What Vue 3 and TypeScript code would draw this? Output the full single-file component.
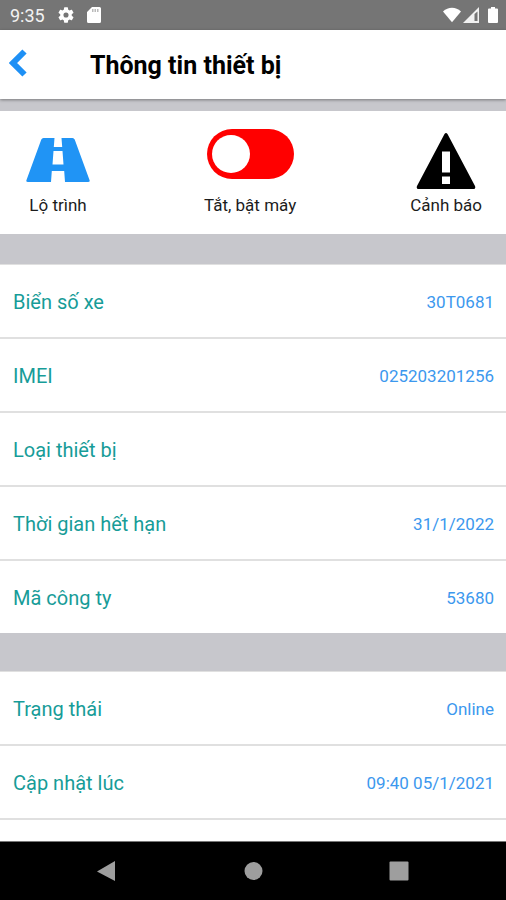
<script setup lang="ts">
import { ref } from 'vue'

interface Field {
  label: string
  value: string
}

const engineOn = ref<boolean>(false)

const deviceFields: Field[] = [
  { label: 'Biển số xe', value: '30T0681' },
  { label: 'IMEI', value: '025203201256' },
  { label: 'Loại thiết bị', value: '' },
  { label: 'Thời gian hết hạn', value: '31/1/2022' },
  { label: 'Mã công ty', value: '53680' },
]

const statusFields: Field[] = [
  { label: 'Trạng thái', value: 'Online' },
  { label: 'Cập nhật lúc', value: '09:40 05/1/2021' },
]
</script>

<template>
  <div class="screen">
    <div class="status-bar">
      <div class="status-group status-left">
        <span>9:35</span>
        <svg class="gear" viewBox="2 2 20 20" aria-hidden="true">
          <path fill-rule="evenodd" d="M19.14 12.94c.04-.3.06-.61.06-.94s-.02-.64-.07-.94l2.03-1.58a.49.49 0 0 0 .12-.61l-1.92-3.32a.49.49 0 0 0-.59-.22l-2.39.96a7 7 0 0 0-1.62-.94l-.36-2.54a.48.48 0 0 0-.48-.41h-3.84a.47.47 0 0 0-.47.41l-.36 2.54c-.59.24-1.13.57-1.62.94l-2.39-.96a.48.48 0 0 0-.59.22L2.74 8.87a.47.47 0 0 0 .12.61l2.03 1.58c-.05.3-.09.63-.09.94s.02.64.07.94l-2.03 1.58a.49.49 0 0 0-.12.61l1.92 3.32c.12.22.37.29.59.22l2.39-.96c.5.38 1.03.7 1.62.94l.36 2.54c.05.24.24.41.48.41h3.84c.24 0 .44-.17.47-.41l.36-2.54c.59-.24 1.13-.56 1.62-.94l2.39.96c.22.08.47 0 .59-.22l1.92-3.32a.47.47 0 0 0-.12-.61zM12 15.2a3.2 3.2 0 1 1 0-6.4 3.2 3.2 0 0 1 0 6.4z" />
        </svg>
        <svg class="card" viewBox="0 0 14 16" aria-hidden="true">
          <path d="M5 0h7.500a1.500 1.500 0 0 1 1.500 1.500v13a1.500 1.500 0 0 1-1.500 1.500h-11A1.500 1.500 0 0 1 0 14.500V5z" />
          <path class="cutout card-slots" d="M5 2h1.500v3H5zM7.500 2H9v3H7.500zM10 2h1.500v3H10z" />
        </svg>
      </div>
      <div class="status-group status-right">
        <svg class="wifi" viewBox="0 0 20 16" aria-hidden="true">
          <path d="M10 16 0 4Q4.500 0 10 0t10 4z" />
        </svg>
        <svg class="signal" viewBox="0 0 16 16" aria-hidden="true">
          <path d="M16 0v16H0z" opacity=".9" />
          <path class="cutout" d="M11.500 7 14.500 4.500V14h-3z" />
        </svg>
        <svg class="battery" viewBox="0 0 10 16" aria-hidden="true">
          <path d="M3 0h4v1.500h2a1 1 0 0 1 1 1V15a1 1 0 0 1-1 1H1a1 1 0 0 1-1-1V2.500a1 1 0 0 1 1-1h2z" />
        </svg>
      </div>
    </div>

    <header class="header">
      <button class="back" type="button" aria-label="Quay lại">
        <svg viewBox="0 0 18 28" aria-hidden="true">
          <path d="M15.500 2.500 4 14l11.500 11.500" />
        </svg>
      </button>
      <h1>Thông tin thiết bị</h1>
    </header>

    <main class="content">
      <section class="actions">
        <button class="action" type="button">
          <svg class="road" viewBox="0 0 64 46" aria-hidden="true">
            <path fill-rule="evenodd" d="M17.500 1h11l-.7 9h8.400l-.7-9h11q1.500 0 2.200 1.500L63.500 43q.8 2-1.500 2H39l-.8-11H25.800L25 45H2q-2.300 0-1.500-2L15.300 2.500Q16 1 17.500 1zM27.500 14l-1 13.500h11l-1-13.500z" />
          </svg>
          <span>Lộ trình</span>
        </button>
        <label class="action">
          <input v-model="engineOn" class="switch" type="checkbox" role="switch" />
          <span>Tắt, bật máy</span>
        </label>
        <button class="action" type="button">
          <svg class="warning" viewBox="0 0 60 56" aria-hidden="true">
            <path fill-rule="evenodd" d="M28.500 1Q30 -1 31.500 1L59 53q1 3-1.500 3h-55Q0 56 1 53zM26 18.500v21h8v-21zm0 25V51h8v-7.500z" />
          </svg>
          <span>Cảnh báo</span>
        </button>
      </section>

      <dl class="group">
        <div v-for="field in deviceFields" :key="field.label" class="row">
          <dt>{{ field.label }}</dt>
          <dd>{{ field.value }}</dd>
        </div>
      </dl>

      <dl class="group group-last">
        <div v-for="field in statusFields" :key="field.label" class="row">
          <dt>{{ field.label }}</dt>
          <dd>{{ field.value }}</dd>
        </div>
      </dl>
    </main>

    <nav class="nav-bar">
      <button type="button" aria-label="Back">
        <svg viewBox="0 0 20 20" aria-hidden="true"><path d="M18 0v20L0 10.500z" /></svg>
      </button>
      <button type="button" aria-label="Home">
        <svg viewBox="0 0 20 20" aria-hidden="true"><circle cx="10.500" cy="10" r="9" /></svg>
      </button>
      <button type="button" aria-label="Recents">
        <svg viewBox="0 0 20 20" aria-hidden="true"><rect x="0.500" y="0.500" width="19" height="19" rx="1" /></svg>
      </button>
    </nav>
  </div>
</template>

<style>
body {
  margin: 0;
}
</style>

<style scoped>
.screen {
  display: flex;
  flex-direction: column;
  height: 100vh;
  overflow: hidden;
  background: #c7c7cc;
  color: #000;
  font-family: Roboto, "Noto Sans", sans-serif;
}

button {
  padding: 0;
  border: 0;
  background: none;
  color: inherit;
  font: inherit;
}

svg {
  display: block;
}

.status-bar {
  display: flex;
  flex: none;
  align-items: center;
  justify-content: space-between;
  height: 30px;
  padding: 0 8px 0 10px;
  background: #757575;
  color: #f2f2f2;
  font-size: 18px;
}

.status-bar svg {
  height: 16px;
  fill: #fff;
}

.status-group {
  display: flex;
  align-items: center;
}

.status-left {
  gap: 13px;
}

.status-right {
  gap: 2px;
}

.gear {
  width: 16px;
}

.card {
  width: 14px;
}

.wifi {
  width: 18px;
}

.signal {
  width: 16px;
}

.status-bar .cutout {
  fill: #757575;
}

.card-slots {
  opacity: 0.5;
}

.battery {
  width: 10px;
  margin-left: 7px;
}

.header {
  display: flex;
  flex: none;
  align-items: center;
  box-sizing: border-box;
  height: 69px;
  background: #fff;
  box-shadow: 0 1px 3px rgba(0, 0, 0, 0.4);
  z-index: 1;
}

.back {
  width: 90px;
  padding-left: 9px;
}

.back svg {
  width: 18px;
  height: 28px;
  margin-bottom: 4px;
  fill: none;
  stroke: #1e90f5;
  stroke-width: 6;
}

h1 {
  margin: 0;
  padding-top: 2px;
  font-size: 25px;
  font-weight: 700;
  line-height: 32px;
}

.content {
  display: flex;
  flex: 1;
  flex-direction: column;
  min-height: 0;
  padding-top: 12px;
}

.actions {
  display: flex;
  flex: none;
  justify-content: space-between;
  box-sizing: border-box;
  height: 123px;
  padding: 17px 24px 17px 26px;
  background: #fff;
}

.action {
  display: flex;
  flex-direction: column;
  align-items: center;
  justify-content: flex-end;
  color: #1c1c1c;
  font-size: 17px;
  line-height: 24px;
}

.road {
  width: 64px;
  height: 46px;
  margin-bottom: 10px;
  fill: #2094f5;
}

.warning {
  width: 60px;
  height: 56px;
  margin-bottom: 4px;
  fill: #000;
}

.switch {
  appearance: none;
  box-sizing: border-box;
  width: 87px;
  height: 50px;
  margin: 0 0 14px;
  padding: 6px 5px;
  border-radius: 25px;
  background: #f00;
}

.switch::before {
  display: block;
  width: 38px;
  height: 38px;
  border-radius: 50%;
  background: #fff;
  content: "";
}

.switch:checked {
  background: #1fae4b;
}

.switch:checked::before {
  margin-left: auto;
}

.group {
  flex: none;
  margin: 30px 0 0;
  border-top: 1px solid #e0e0e0;
  background: #fff;
}

.group-last {
  flex: 1;
  margin-top: 38px;
}

.row {
  display: flex;
  align-items: center;
  justify-content: space-between;
  box-sizing: border-box;
  height: 74px;
  padding: 2px 12px 0 13px;
  border-bottom: 2px solid #e0e0e0;
}

.group:not(.group-last) .row:last-child {
  height: 72px;
  border-bottom: 0;
}

dt {
  color: #179c98;
  font-size: 20px;
  line-height: 28px;
}

dd {
  margin: 0;
  color: #3c98ee;
  font-size: 17px;
  line-height: 28px;
}

.nav-bar {
  display: flex;
  flex: none;
  align-items: center;
  justify-content: center;
  gap: 126px;
  height: 58px;
  border-top: 1px solid #777;
  background: #000;
}

.nav-bar svg {
  width: 20px;
  height: 20px;
  fill: #9e9e9e;
}
</style>
